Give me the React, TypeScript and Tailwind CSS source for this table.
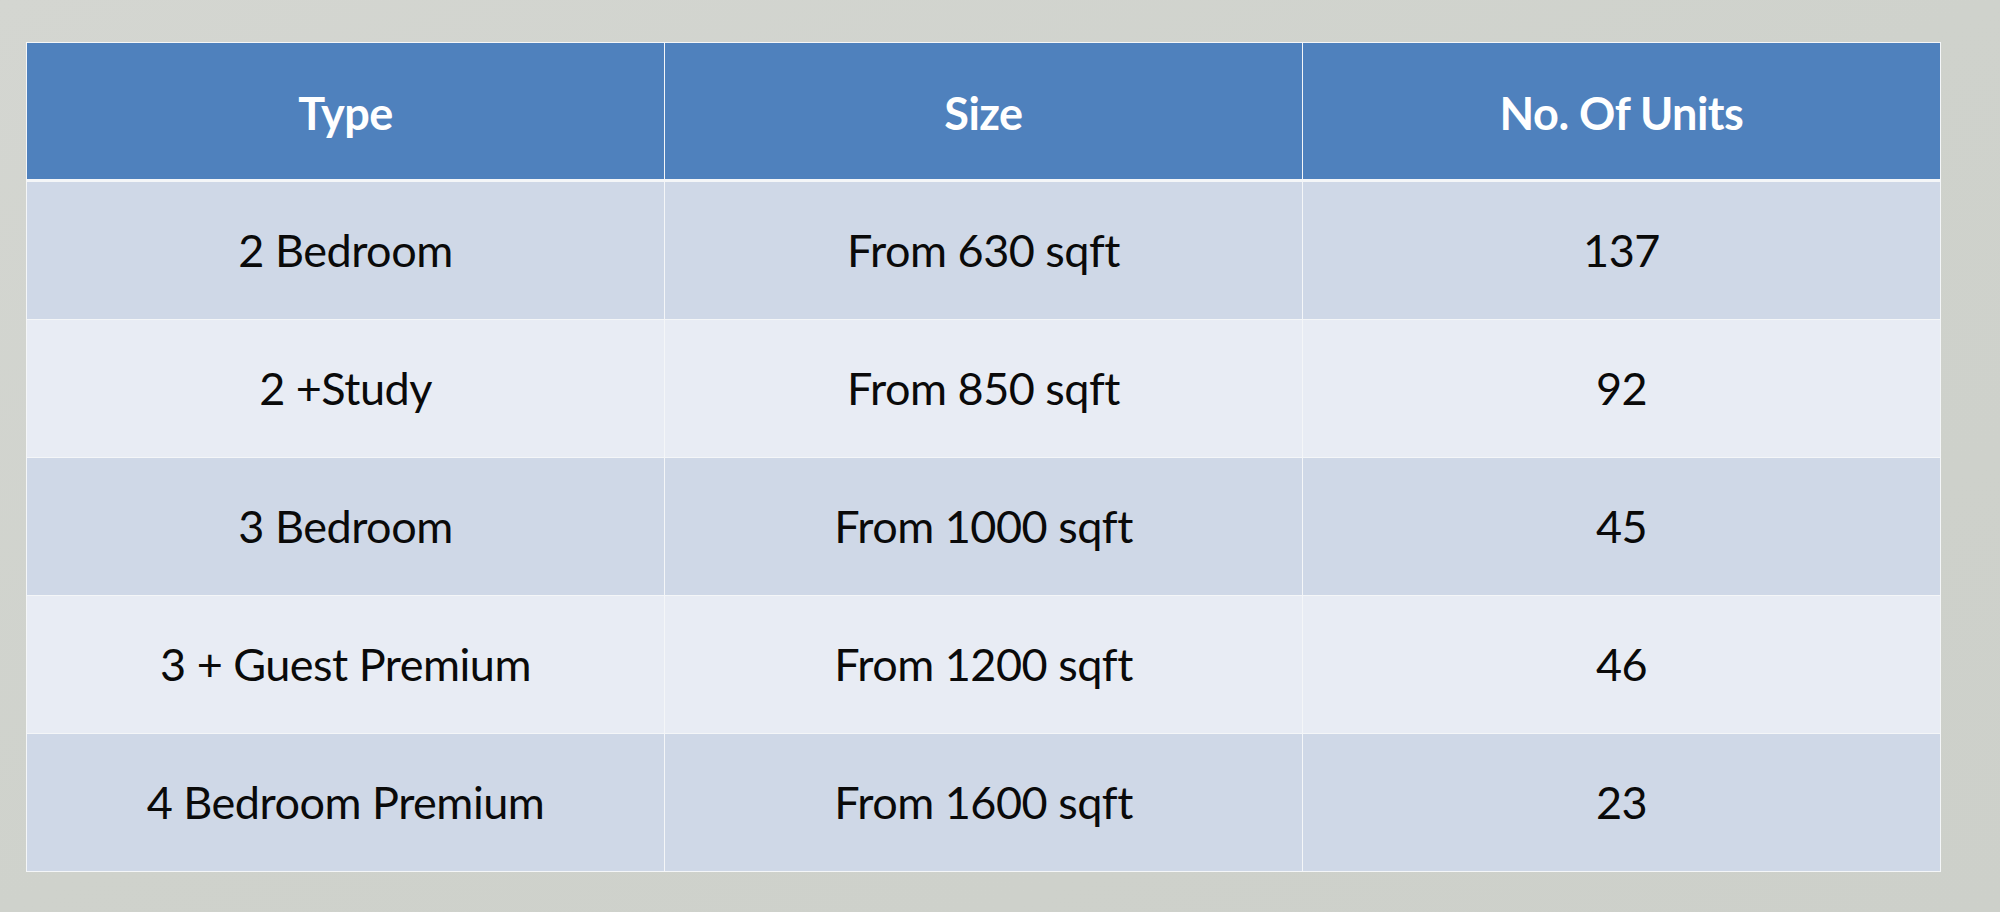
const rows = [
  { type: "2 Bedroom", size: "From 630 sqft", units: "137" },
  { type: "2 +Study", size: "From 850 sqft", units: "92" },
  { type: "3 Bedroom", size: "From 1000 sqft", units: "45" },
  { type: "3 + Guest Premium", size: "From 1200 sqft", units: "46" },
  { type: "4 Bedroom Premium", size: "From 1600 sqft", units: "23" },
];

export default function App() {
  return (
    <div
      className="w-[2000px] h-[912px] overflow-hidden bg-gradient-to-br from-[#d4d6d1] via-[#cfd2cc] to-[#cdd0ca] pl-[26px] pt-[42px]"
      style={{ fontFamily: "Lato, 'Open Sans', sans-serif" }}
    >
      {/* Units table */}
      <div className="w-[1915px] grid grid-cols-3 gap-px bg-[#f4f6f8] p-px">
        {["Type", "Size", "No. Of Units"].map((h) => (
          <div
            key={h}
            className="h-[136px] mb-[2px] pt-[6px] bg-[#4f81bd] flex items-center justify-center text-white font-bold text-[45px] tracking-[-0.5px]"
          >
            {h}
          </div>
        ))}
        {rows.map((r, i) => {
          const bg = i % 2 === 0 ? "bg-[#cfd8e7]" : "bg-[#e8ecf4]";
          return [r.type, r.size, r.units].map((c, j) => (
            <div
              key={i + "-" + j}
              className={`h-[137px] ${bg} flex items-center justify-center text-[#0a0a0a] text-[45px] tracking-[-0.5px]`}
            >
              {c}
            </div>
          ));
        })}
      </div>
    </div>
  );
}
